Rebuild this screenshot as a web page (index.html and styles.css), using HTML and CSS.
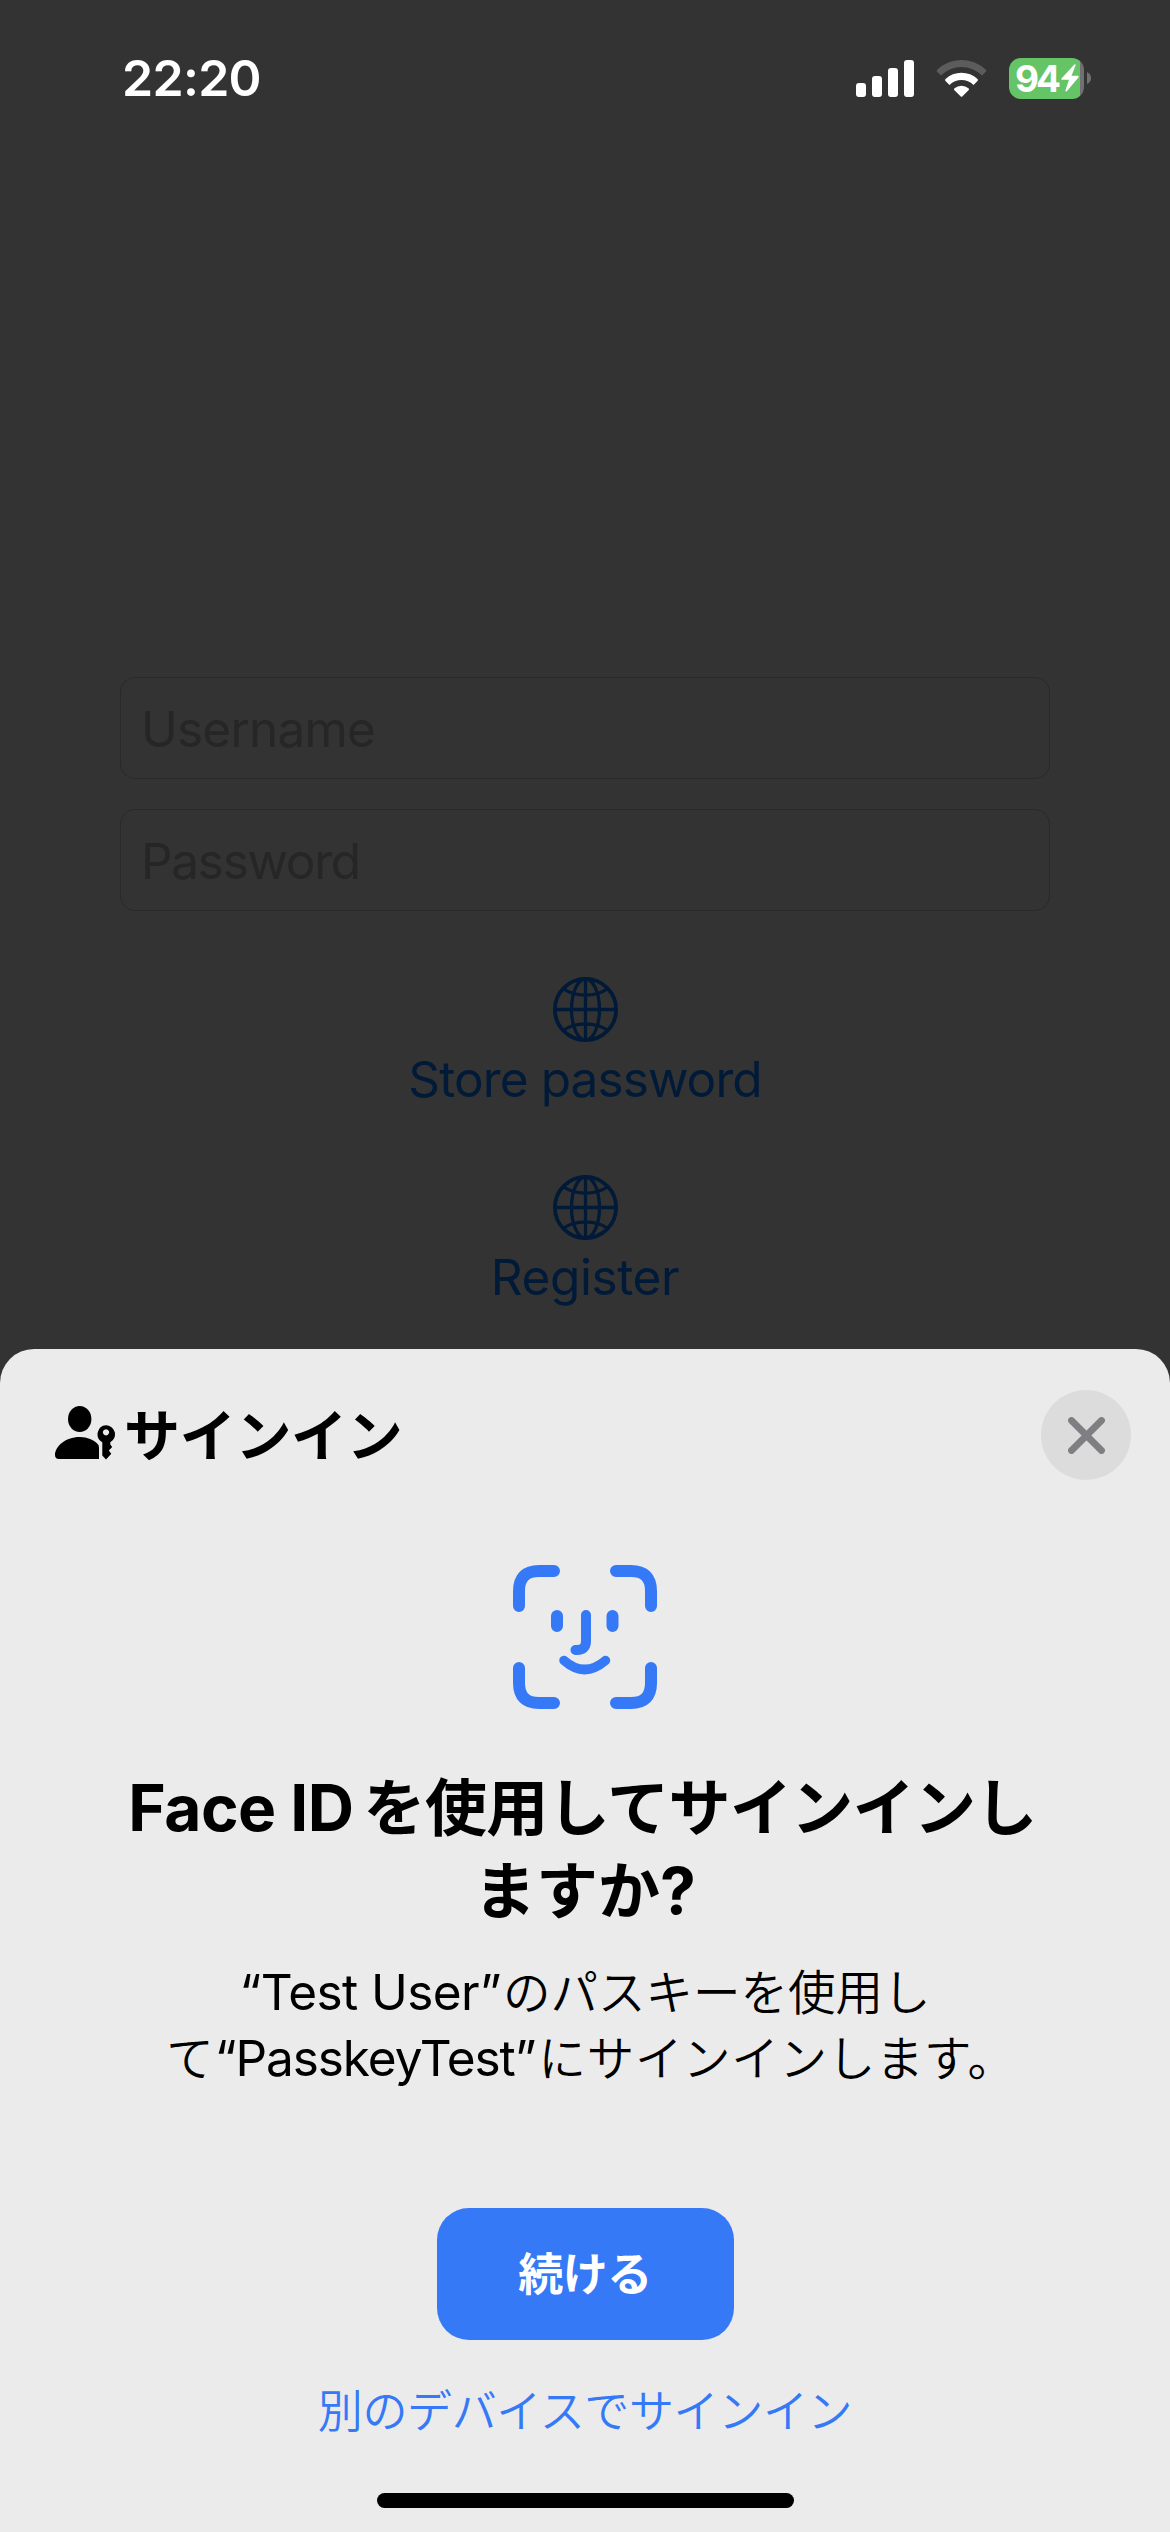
FILE: index.html
```html
<!DOCTYPE html>
<html lang="ja">
<head>
<meta charset="utf-8">
<title>サインイン</title>
<link rel="stylesheet" href="styles.css">
</head>
<body>
<div class="screen">
  <header class="status">
    <span class="time">22:20</span>
    <div class="indicators">
      <svg class="signal" viewBox="0 0 58 37"><rect x="0" y="23" width="10" height="14" rx="3"/><rect x="16" y="16" width="10" height="21" rx="3"/><rect x="32" y="8" width="10" height="29" rx="3"/><rect x="48" y="0" width="10" height="37" rx="3"/></svg>
      <svg class="wifi" viewBox="0 0 51 37"><path class="faint" d="M1.2 9.8a35 35 0 0 1 48.6 0q1 1 0 2l-3.800 3.700a29 29 0 0 0-41 0L1.200 11.800q-1-1 0-2z"/><path d="M9.500 19a23.500 23.500 0 0 1 32 0q1 1 0 2l-4 4a17 17 0 0 0-24 0l-4-4q-1-1 0-2z"/><path d="M18.500 28.200a11 11 0 0 1 14 0q1 1 0 2l-6 6q-1 1-2 0l-6-6q-1-1 0-2z"/></svg>
      <div class="battery">
        <div class="cell"><span class="level">94</span><svg class="bolt" viewBox="0 0 18 28"><path d="M13.300.500 .700 14.300q-.900 1.400.7 1.500H8L4.400 26.500q-.2 1.700 1.400.7L17.400 13.400q.9-1.500-.7-1.600h-6.200L14.600 1.500q.2-1.700-1.300-1z"/></svg></div>
        <svg class="cap" viewBox="0 0 4 12"><path d="M0 0q4 2 4 6t-4 6z"/></svg>
      </div>
    </div>
  </header>
  <main class="form">
    <div class="field"><span class="username">Username</span></div>
    <div class="field"><span class="pass">Password</span></div>
    <a class="action"><svg class="globe" viewBox="0 0 65 65"><circle cx="32.500" cy="32.500" r="30.600" stroke-width="3.800"/><path d="M32.500 2v61M2 32.500h61M10 11.500q9.500 6.700 22.500 6.700T55 11.500M10 53.500q9.500-6.700 22.500-6.700T55 53.500"/><ellipse cx="32.500" cy="32.500" rx="14" ry="30.500"/></svg><span class="store">Store password</span></a>
    <a class="action"><svg class="globe" viewBox="0 0 65 65"><circle cx="32.500" cy="32.500" r="30.600" stroke-width="3.800"/><path d="M32.500 2v61M2 32.500h61M10 11.500q9.500 6.700 22.500 6.700T55 11.500M10 53.500q9.500-6.700 22.500-6.700T55 53.500"/><ellipse cx="32.500" cy="32.500" rx="14" ry="30.500"/></svg><span class="register">Register</span></a>
  </main>
  <section class="sheet">
    <div class="sheet-head">
      <svg class="passkey" viewBox="0 0 60 54"><ellipse cx="24.700" cy="13" rx="11.700" ry="13"/><path d="M4 53q-4 0-4-4C0 41 10 31 24.700 31c8 0 14 3 17.500 6.500q1.800 1.500 1.800 3.500v12z"/><path fill-rule="evenodd" d="M51 19.300a9 9 0 0 1 4.300 16.900v2.300l1.900 2.600-3.400 3.300 2.500 3.300-5.300 5.700-3.700-3.800V36.200A9 9 0 0 1 51 19.300zm0 3.900a3.100 3.100 0 1 0 .01 0z"/></svg>
      <h1 class="title">サインイン</h1>
      <button class="close"><svg viewBox="0 0 37 37"><path d="M3.500 3.500l30 30M33.500 3.500l-30 30"/></svg></button>
    </div>
    <svg class="faceid" viewBox="0 0 144 144"><g stroke-width="12"><path d="M6 41V26Q6 6 26 6h15M103 6h15q20 0 20 20v15M138 103v15q0 20-20 20h-15M41 138H26q-20 0-20-20v-15"/><path d="M44 51v10M99.500 51v10"/></g><path stroke-width="10" d="M73 50v26q0 9-9 9h-1.500"/><path stroke-width="9.500" d="M51 95.500q20.500 18 41.500 0"/></svg>
    <h2 class="question"><span class="line first"><span class="q-latin">Face ID</span><span class="q-jp">を使用してサインインし</span></span><span class="line">ますか<span class="q-mark">?</span></span></h2>
    <p class="detail"><span class="line"><span class="d-user">“Test User”</span><span class="jp d-jp1">のパスキーを使用し</span></span><span class="line second"><span class="jp">て</span><span class="d-app">“PasskeyTest”</span><span class="jp d-jp3">にサインインします。</span></span></p>
    <button class="primary">続ける</button>
    <a class="other">別のデバイスでサインイン</a>
    <div class="home"></div>
  </section>
</div>
</body>
</html>
```
FILE: styles.css
```css
* { box-sizing: border-box; }
body { margin: 0; background: #333; font-family: Inter, "Noto Sans CJK JP", sans-serif; }
.screen { position: relative; width: 1170px; height: 2532px; overflow: hidden; background: #333; }

.status { display: flex; justify-content: space-between; align-items: center; height: 156px; padding: 0 79px 0 122px; color: #fff; }
.time { font-size: 50px; font-weight: 600; line-height: 60px; letter-spacing: -0.7px; }
.indicators { display: flex; align-items: center; }
.indicators svg { fill: #fff; display: block; }
.signal { width: 58px; height: 37px; }
.wifi { width: 51px; height: 37px; margin: 0 22px; }
.indicators .faint { fill: #5c5c5c; }
.battery { display: flex; align-items: center; gap: 3px; }
.cell { display: flex; align-items: center; width: 75px; height: 41px; border-radius: 12px; padding-left: 6px; background: linear-gradient(90deg, #65c466 71px, #707070 71px); }
.level { width: 46px; font-size: 37px; font-weight: 700; line-height: 41px; letter-spacing: -3px; }
.bolt { width: 18px; height: 28px; }
.indicators .cap { width: 4px; height: 12px; fill: #707070; }

.form { display: flex; flex-direction: column; align-items: center; padding: 521px 120px 0; }
.field { width: 930px; height: 102px; margin-bottom: 30px; padding: 2px 0 0 20px; border: 1px solid #292929; border-radius: 15px; color: #262626; font-size: 49.5px; line-height: 98px; }
.username { letter-spacing: -0.8px; }
.pass { letter-spacing: -1.3px; }
.action { display: flex; flex-direction: column; align-items: center; gap: 7px; margin-top: 36px; margin-bottom: 29px; color: #001a38; font-size: 49.5px; line-height: 61px; }
.store { letter-spacing: -0.9px; }
.register { letter-spacing: -0.4px; }
.globe { width: 65px; height: 65px; margin-left: 1px; fill: none; stroke: #001a38; stroke-width: 3.3; }

.sheet { position: absolute; left: 0; right: 0; bottom: 0; height: 1183px; padding-top: 41px; display: flex; flex-direction: column; align-items: center; background: #ebebeb; border-radius: 34px 34px 0 0; color: #000; }
.sheet-head { display: flex; align-items: center; align-self: stretch; height: 90px; padding: 0 39px 0 55px; }
.passkey { width: 60px; height: 54px; margin-top: -4px; }
.title { margin: 1px auto 0 9px; font-size: 56px; font-weight: 700; line-height: 80px; letter-spacing: -0.3px; }
.close { width: 90px; height: 90px; padding: 0; border: 0; border-radius: 50%; background: #dcdcdc; display: flex; align-items: center; justify-content: center; }
.close svg { width: 37px; height: 37px; fill: none; stroke: #7f7e83; stroke-width: 6.8; stroke-linecap: round; }
.faceid { width: 144px; height: 144px; margin-top: 85px; fill: none; stroke: #3579f7; stroke-linecap: round; }

.line { display: block; white-space: nowrap; }
.question { margin: 58px 0 26px; text-align: center; font-size: 62px; font-weight: 700; line-height: 83px; }
.first { padding-right: 5px; }
.q-latin, .q-mark { font-size: 64px; line-height: 1; }
.q-latin { letter-spacing: -0.5px; }
.q-jp { margin-left: 10px; letter-spacing: -0.63px; }
.detail { margin: 0; text-align: center; font-size: 49.5px; line-height: 66px; }
.second { padding-left: 12px; }
.jp { font-size: 47.5px; font-weight: 350; line-height: 1; }
.d-user { letter-spacing: -0.6px; }
.d-jp1 { margin-left: 2px; }
.d-app { margin-left: 1px; letter-spacing: -1.07px; }
.d-jp3 { margin-left: 3px; letter-spacing: 0.7px; }

.primary { width: 297px; height: 132px; margin-top: 117px; padding: 2px 0 0; border: 0; border-radius: 32px; background: #3579f7; color: #fff; font-family: inherit; font-size: 45px; font-weight: 700; line-height: 60px; letter-spacing: -0.5px; }
.other { margin-top: 42px; color: #3579f7; font-size: 45px; font-weight: 350; line-height: 60px; letter-spacing: -0.35px; }
.home { width: 417px; height: 15px; margin-top: 51px; border-radius: 8px; background: #000; }
```
